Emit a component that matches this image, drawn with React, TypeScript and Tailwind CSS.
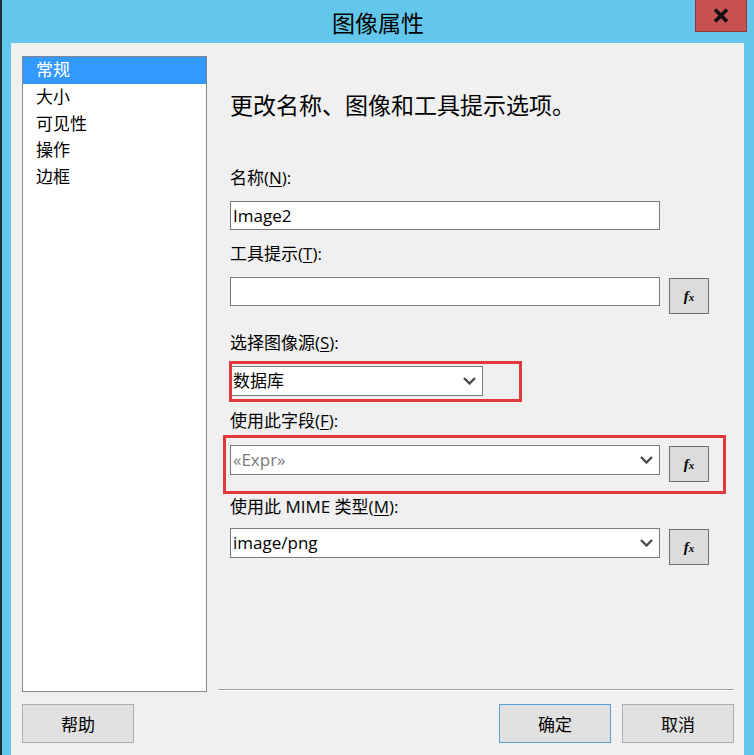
import React from "react";

const Chevron = () => (
  <svg width="13" height="8" viewBox="0 0 13 8" className="shrink-0">
    <path d="M1 1 L6.5 6.5 L12 1" fill="none" stroke="#4a4a4a" strokeWidth="2.4" />
  </svg>
);

const Fx = () => (
  <div className="w-[40px] h-[36px] mt-px bg-[#dcdcdc] border border-[#707070] flex items-center justify-center shrink-0">
    <span className="font-['Liberation_Serif',serif] italic font-bold text-[15px] leading-none text-black">
      f<span className="text-[11px]">x</span>
    </span>
  </div>
);

const Label = ({ children, className = "" }: { children: React.ReactNode; className?: string }) => (
  <div className={"text-[17px] leading-[20px] text-black " + className}>{children}</div>
);

const Select = ({ text, w, gray }: { text: string; w: string; gray?: boolean }) => (
  <div className={"h-[30px] bg-white border border-[#7a7a7a] flex items-center justify-between pl-[2px] pr-[6px] " + w}>
    <span className={"text-[17px] leading-[20px] " + (gray ? "text-[#7a7a7a]" : "text-black")}>{text}</span>
    <Chevron />
  </div>
);

export default function App() {
  const items = ["常规", "大小", "可见性", "操作", "边框"];
  return (
    <div className="w-[754px] h-[755px] bg-[#63c7eb] border-l-2 border-[#1f2a33] flex flex-col font-['Open_Sans','Noto_Sans_CJK_SC',sans-serif] overflow-hidden">
      {/* title bar */}
      <div className="h-[43px] grid grid-cols-[1fr_auto_1fr] shrink-0">
        <div />
        <div className="text-[23px] leading-[43px] text-black font-['Noto_Sans_CJK_SC',sans-serif] pt-px">图像属性</div>
        <div className="flex justify-end pr-[7px]">
          <div className="w-[52px] h-[32px] bg-[#c75050] border border-[#8f3a3a] border-t-0 flex items-center justify-center">
            <svg width="16" height="15" viewBox="0 0 16 15">
              <path d="M2 1.5 L14 13.5 M14 1.5 L2 13.5" stroke="#111" strokeWidth="3.6" />
            </svg>
          </div>
        </div>
      </div>

      {/* body */}
      <div className="ml-[9px] mr-[10px] flex-1 bg-[#f0f0f0] flex flex-col pt-[13px] pl-[11px] pr-[10px]">
        <div className="flex gap-[11px] h-[636px]">
          {/* list */}
          <div className="w-[185px] h-full bg-white border border-[#828790] flex flex-col">
            {items.map((it, i) => (
              <div
                key={it}
                className={
                  "h-[26.75px] pl-[13px] text-[17px] leading-[24px] font-['Noto_Sans_CJK_SC',sans-serif] " +
                  (i === 0 ? "bg-[#3399ff] text-white" : "text-black")
                }
              >
                {it}
              </div>
            ))}
          </div>

          {/* right panel */}
          <div className="flex-1 flex flex-col">
            <div className="pl-[12px] flex flex-col">
              <div className="mt-[33px] text-[23px] leading-[30px] text-black font-['Noto_Sans_CJK_SC',sans-serif]">
                更改名称、图像和工具提示选项。
              </div>

              <Label className="mt-[49px]">
                名称(<span className="underline underline-offset-2">N</span>):
              </Label>
              <div className="mt-[13px] w-[430px] h-[29px] bg-white border border-[#7a7a7a] flex items-center pl-[2px] text-[17px] text-black">
                Image2
              </div>

              <Label className="mt-[14px]">
                工具提示(<span className="underline underline-offset-2">T</span>):
              </Label>
              <div className="mt-[13px] flex items-start gap-[9px]">
                <div className="w-[430px] h-[29px] bg-white border border-[#7a7a7a]" />
                <Fx />
              </div>

              <Label className="mt-[19px]">
                选择图像源(<span className="underline underline-offset-2">S</span>):
              </Label>
              <div className="mt-[13px] relative self-start">
                <Select text="数据库" w="w-[253px]" />
                <div className="absolute left-[-1px] top-[-5px] right-[-39px] bottom-[-6px] border-[3px] border-[#e0383c] pointer-events-none" />
              </div>

              <Label className="mt-[15px]">
                使用此字段(<span className="underline underline-offset-2">F</span>):
              </Label>
              <div className="mt-[14px] relative flex items-start gap-[9px] self-start">
                <Select text="«Expr»" w="w-[430px]" gray />
                <Fx />
                <div className="absolute left-[-7px] top-[-10px] right-[-17px] bottom-[-12px] border-[3px] border-[#e0383c] pointer-events-none" />
              </div>

              <Label className="mt-[15px]">
                使用此 MIME 类型(<span className="underline underline-offset-2">M</span>):
              </Label>
              <div className="mt-[11px] flex items-start gap-[9px]">
                <Select text="image/png" w="w-[430px]" />
                <Fx />
              </div>
            </div>
            <div className="mt-auto mb-[1px] border-t border-[#a0a0a0] border-b border-b-white" />
          </div>
        </div>

        {/* buttons */}
        <div className="mt-[12px] flex items-start">
          <button className="w-[112px] h-[39px] bg-[#e1e1e1] border border-[#adadad] text-[17px] text-black font-['Noto_Sans_CJK_SC',sans-serif]">
            帮助
          </button>
          <div className="flex-1" />
          <div className="flex gap-[11px]">
            <button className="w-[112px] h-[39px] bg-[#e1e1e1] border border-[#5a9fd9] text-[17px] text-black font-['Noto_Sans_CJK_SC',sans-serif]">
              确定
            </button>
            <button className="w-[112px] h-[39px] bg-[#e1e1e1] border border-[#adadad] text-[17px] text-black font-['Noto_Sans_CJK_SC',sans-serif]">
              取消
            </button>
          </div>
        </div>
      </div>
    </div>
  );
}
